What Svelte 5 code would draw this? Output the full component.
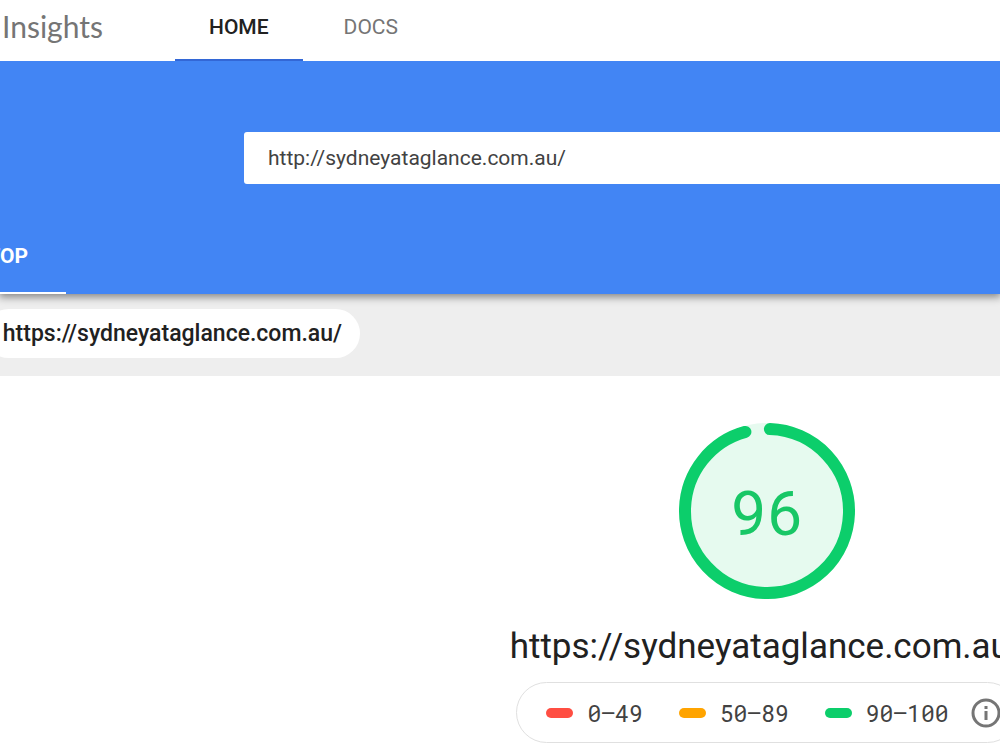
<script>
	let url = 'http://sydneyataglance.com.au/';
	const testedUrl = 'https://sydneyataglance.com.au/';
	const score = 96;

	const radius = 82;
	const circumference = 2 * Math.PI * radius;
	// the round caps add to the arc, so it is drawn a bit shorter
	const arc = (score / 100) * circumference - 5;

	const scale = [
		{ range: '0–49', level: 'fail' },
		{ range: '50–89', level: 'average' },
		{ range: '90–100', level: 'pass' }
	];
</script>

<div class="page">
	<header>
		<div class="brand">Insights</div>
		<nav>
			<a class="active" href="#home">HOME</a>
			<a href="#docs">DOCS</a>
		</nav>
	</header>

	<section class="hero">
		<form on:submit|preventDefault>
			<input type="text" aria-label="Web page URL" bind:value={url} />
		</form>
		<button class="tab" type="button">DESKTOP</button>
	</section>

	<div class="origin">
		<a class="chip" href="#report">{testedUrl}</a>
	</div>

	<main>
		<div class="gauge">
			<svg viewBox="0 0 176 176" aria-hidden="true">
				<circle class="gauge-base" cx="88" cy="88" r="88" />
				<circle
					class="gauge-arc"
					cx="88"
					cy="88"
					r={radius}
					stroke-dasharray="{arc} {circumference}"
					transform="rotate(-88 88 88)"
				/>
			</svg>
			<div class="score">{score}</div>
		</div>
		<h1>{testedUrl}</h1>
		<div class="scale">
			{#each scale as item}
				<span class="range {item.level}">{item.range}</span>
			{/each}
			<button class="info" type="button" aria-label="About the score">
				<svg viewBox="0 0 30 30">
					<circle cx="15" cy="15" r="13" />
					<path d="M15 13v9M15 8v3" />
				</svg>
			</button>
		</div>
	</main>
</div>

<style>
	:global(body) {
		margin: 0;
		background: #fff;
	}
	.page {
		font-family: Roboto, 'Liberation Sans', sans-serif;
		color: #212121;
		overflow: hidden;
	}
	a {
		text-decoration: none;
	}
	button {
		border: 0;
		background: none;
		font-family: inherit;
		cursor: pointer;
	}
	header {
		position: relative;
		z-index: 1;
		display: flex;
		height: 61px;
		line-height: 54px;
		background: #fff;
	}
	.brand {
		box-sizing: border-box;
		width: 175px;
		padding-left: 2px;
		font-family: 'Google Sans', Lato, sans-serif;
		font-size: 30px;
		line-height: 52px;
		color: #757575;
	}
	nav {
		display: flex;
		gap: 7px;
	}
	nav a {
		box-sizing: border-box;
		padding: 0 34px;
		font-size: 21px;
		color: #757575;
	}
	nav a.active {
		font-weight: 500;
		color: #212121;
		border-bottom: 2px solid #3367d6;
	}
	.hero {
		position: relative;
		background: #4285f4;
		padding-top: 71px;
		box-shadow: 0 2px 8px 1px rgba(0, 0, 0, 0.45);
	}
	form {
		display: flex;
		padding-left: 244px;
	}
	input {
		box-sizing: border-box;
		flex: 1;
		height: 52px;
		padding: 0 24px;
		border: 0;
		border-radius: 3px 0 0 3px;
		background: #fff;
		font-family: inherit;
		font-size: 21px;
		color: #424242;
	}
	.tab {
		display: flex;
		justify-content: flex-end;
		box-sizing: border-box;
		width: 66px;
		height: 76px;
		margin-top: 34px;
		padding: 0 38px 0 0;
		border-bottom: 2px solid #fff;
		font-size: 21px;
		line-height: 76px;
		font-weight: 700;
		color: #fff;
	}
	.origin {
		display: flex;
		padding: 15px 0 18px;
		background: #eee;
	}
	.chip {
		display: flex;
		justify-content: flex-end;
		box-sizing: border-box;
		width: 376px;
		margin-left: -16px;
		padding: 1px 18px 0 18px;
		border-radius: 25px;
		background: #fff;
		font-size: 23px;
		line-height: 48px;
		font-weight: 500;
		color: #212121;
	}
	main {
		display: flex;
		flex-direction: column;
		align-items: center;
		margin-left: 534px;
		padding: 47px 0 8px;
	}
	.gauge {
		display: grid;
		place-items: center;
		width: 176px;
		height: 176px;
	}
	.gauge svg,
	.score {
		grid-area: 1 / 1;
	}
	.gauge svg {
		width: 176px;
		height: 176px;
	}
	.gauge-base {
		fill: #e6faef;
	}
	.gauge-arc {
		fill: none;
		stroke: #0cce6b;
		stroke-width: 12;
		stroke-linecap: round;
	}
	.score {
		font-family: 'Roboto Mono', Roboto, sans-serif;
		font-size: 62px;
		line-height: 64px;
		color: #18c766;
	}
	h1 {
		margin: 24px 0 11px;
		font-size: 35px;
		line-height: 48px;
		font-weight: 400;
		white-space: nowrap;
	}
	.scale {
		display: flex;
		align-items: center;
		box-sizing: border-box;
		height: 61px;
		padding: 0 16px 0 29px;
		border: 1px solid #e0e0e0;
		border-radius: 31px;
		font-family: 'Roboto Mono', 'Liberation Mono', monospace;
		font-size: 23px;
		color: #424242;
	}
	.range {
		display: flex;
		align-items: center;
		gap: 14px;
		margin-right: 36px;
		white-space: nowrap;
	}
	.range::before {
		content: '';
		width: 27px;
		height: 10px;
		border-radius: 5px;
		background: #ff4e42;
	}
	.average::before {
		background: #ffa400;
	}
	.pass::before {
		background: #0cce6b;
	}
	.pass {
		margin-right: 22px;
	}
	.info {
		display: flex;
		padding: 0;
	}
	.info svg {
		width: 30px;
		height: 30px;
		fill: none;
		stroke: #757575;
		stroke-width: 3;
	}
</style>
